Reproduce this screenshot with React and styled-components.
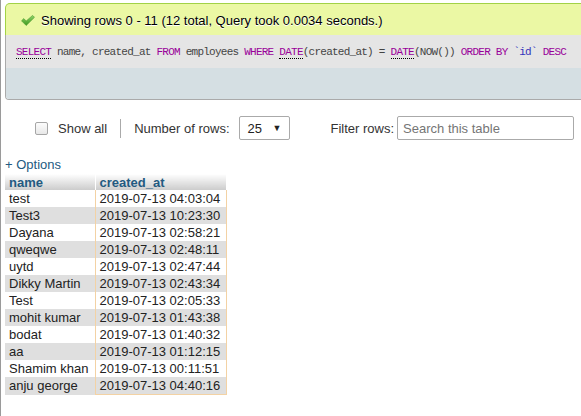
import React from "react";
import styled, { createGlobalStyle } from "styled-components";

const GlobalStyle = createGlobalStyle`
  html, body { margin: 0; padding: 0; background: #fff; }
  body { font-family: "Liberation Sans", Arial, sans-serif; font-size: 13px; color: #000; }
  * { box-sizing: border-box; }
`;

const Page = styled.div`
  width: 581px;
  height: 416px;
  overflow: hidden;
  border-left: 1px solid #9a9a9a;
  padding: 3px 0 0 4px;
`;

const ResultBox = styled.div`
  width: 620px;
`;

const Success = styled.div`
  height: 32px;
  background: #ebf8a4;
  border: 1px solid #a2d246;
  border-bottom: none;
  border-radius: 5px 0 0 0;
  display: flex;
  align-items: center;
  gap: 6px;
  padding: 2px 0 0 15px;
  font-size: 13px;
  color: #000;
  text-shadow: 0 1px 0 #fff;
`;

const SqlOuter = styled.div`
  border: 1px solid #aaa;
  border-top: none;
  border-radius: 0 0 0 4px;
  overflow: hidden;
`;

const SqlLine = styled.div`
  height: 33px;
  line-height: 33px;
  background: #e5e5e5;
  padding: 1px 0 0 10px;
  font-family: "Liberation Mono", "DejaVu Sans Mono", monospace;
  font-size: 11px;
  letter-spacing: -0.75px;
  color: #444;
  white-space: pre;
`;

const Kw = styled.span`
  color: ${(p) => (p.$kind === "backtick" ? "#3333bb" : "#990099")};
  ${(p) => (p.$link ? "border-bottom: 1px dotted #000;" : "")}
`;

const Tools = styled.div`
  height: 31px;
  background: #d5dfe3;
`;

const Controls = styled.div`
  display: flex;
  align-items: center;
  height: 24px;
  margin-top: 16px;
  padding-left: 30px;
  color: #333;
`;

const Check = styled.span`
  width: 13px;
  height: 13px;
  border: 1px solid #a6a6a6;
  border-radius: 2px;
  background: linear-gradient(#fcfcfc, #e8e8e8);
  margin-right: 10px;
`;

const Sep = styled.span`
  width: 1px;
  height: 19px;
  background: #aaa;
  margin: 0 13px 0 13px;
`;

const Label = styled.span`
  white-space: nowrap;
`;

const Select = styled.div`
  width: 51px;
  height: 24px;
  margin-left: 9px;
  border: 1px solid #aaa;
  border-radius: 2px;
  display: flex;
  align-items: center;
  justify-content: space-between;
  padding: 0 7px 0 8px;
  color: #222;
  background: #fff;
`;

const Arrow = styled.span`
  font-size: 9px;
  color: #222;
`;

const FilterLabel = styled(Label)`
  margin-left: 41px;
`;

const Search = styled.div`
  width: 177px;
  height: 24px;
  margin-left: 3px;
  border: 1px solid #aaa;
  border-radius: 2px;
  padding-left: 5px;
  display: flex;
  align-items: center;
  color: #757575;
`;

const Options = styled.div`
  margin-top: 17px;
  line-height: 16px;
  color: #235a81;
`;

const Table = styled.table`
  border-collapse: collapse;
  margin-top: 1px;
  font-size: 13px;
`;

const Th = styled.th`
  text-align: left;
  font-weight: bold;
  color: #235a81;
  padding: 0 4px;
  height: 16px;
  line-height: 15px;
  background: linear-gradient(#ffffff, #cccccc);
  width: ${(p) => p.$w}px;
  border-left: ${(p) => (p.$first ? "none" : "1px solid #fff")};
`;

const Tr = styled.tr`
  background: ${(p) => (p.$even ? "#dfdfdf" : "#fff")};
`;

const Td = styled.td`
  padding: 0 4px;
  height: 17px;
  line-height: 17px;
  color: #222;
  white-space: nowrap;
  ${(p) =>
    p.$date
      ? `border-left: 1px solid #f3d2a4; border-right: 1px solid #f3d2a4; ${
          p.$last ? "border-bottom: 1px solid #f3d2a4;" : ""
        }`
      : ""}
`;

const CheckIcon = () => (
  <svg width="14" height="11" viewBox="0 0 14 11">
    <defs>
      <linearGradient id="g" x1="0" y1="0" x2="0" y2="1">
        <stop offset="0" stopColor="#8fd36a" />
        <stop offset="1" stopColor="#3e9a1f" />
      </linearGradient>
    </defs>
    <path d="M0.5 5.8 L2.8 3.6 L5.2 6.0 L11.6 0.4 L13.5 2.3 L5.2 10.5 Z" fill="url(#g)" stroke="#4a9a2c" strokeWidth="0.6" />
  </svg>
);

const rows = [
  ["test", "2019-07-13 04:03:04"],
  ["Test3", "2019-07-13 10:23:30"],
  ["Dayana", "2019-07-13 02:58:21"],
  ["qweqwe", "2019-07-13 02:48:11"],
  ["uytd", "2019-07-13 02:47:44"],
  ["Dikky Martin", "2019-07-13 02:43:34"],
  ["Test", "2019-07-13 02:05:33"],
  ["mohit kumar", "2019-07-13 01:43:38"],
  ["bodat", "2019-07-13 01:40:32"],
  ["aa", "2019-07-13 01:12:15"],
  ["Shamim khan", "2019-07-13 00:11:51"],
  ["anju george", "2019-07-13 04:40:16"],
];

export default function App() {
  return (
    <>
      <GlobalStyle />
      <Page>
        <ResultBox>
          <Success>
            <CheckIcon />
            <span>Showing rows 0 - 11 (12 total, Query took 0.0034 seconds.)</span>
          </Success>
          <SqlOuter>
            <SqlLine>
              <Kw $link>SELECT</Kw>{" name, created_at "}<Kw>FROM</Kw>{" employees "}
              <Kw>WHERE</Kw>{" "}<Kw $link>DATE</Kw>{"(created_at) = "}<Kw $link>DATE</Kw>
              {"(NOW()) "}<Kw>ORDER BY</Kw>{" "}<Kw $kind="backtick">`id`</Kw>{" "}<Kw>DESC</Kw>
            </SqlLine>
            <Tools />
          </SqlOuter>
        </ResultBox>
        <Controls>
          <Check />
          <Label>Show all</Label>
          <Sep />
          <Label>Number of rows:</Label>
          <Select>
            <span>25</span>
            <Arrow>▼</Arrow>
          </Select>
          <FilterLabel>Filter rows:</FilterLabel>
          <Search>Search this table</Search>
        </Controls>
        <Options>+ Options</Options>
        <Table>
          <thead>
            <tr>
              <Th $first $w={90}>name</Th>
              <Th $w={131}>created_at</Th>
            </tr>
          </thead>
          <tbody>
            {rows.map(([n, d], i) => (
              <Tr key={i} $even={i % 2 === 1}>
                <Td>{n}</Td>
                <Td $date $last={i === rows.length - 1}>{d}</Td>
              </Tr>
            ))}
          </tbody>
        </Table>
      </Page>
    </>
  );
}
